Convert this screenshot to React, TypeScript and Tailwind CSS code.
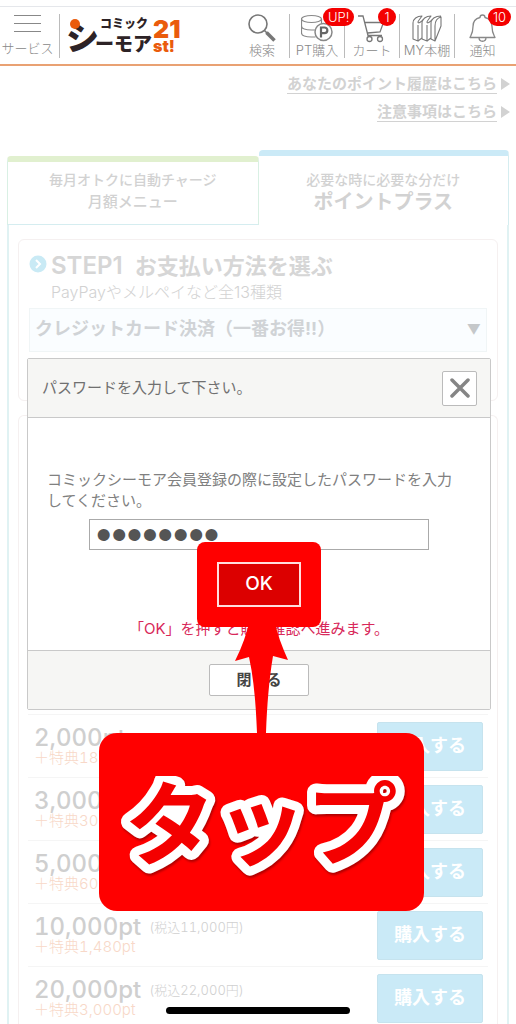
import React from 'react';

const plans = [
{ points: '2,000pt', price: '', bonus: '＋特典180pt' },
{ points: '3,000pt', price: '', bonus: '＋特典300pt' },
{ points: '5,000pt', price: '', bonus: '＋特典600pt' },
{ points: '10,000pt', price: '(税込11,000円)', bonus: '＋特典1,480pt' },
{ points: '20,000pt', price: '(税込22,000円)', bonus: '＋特典3,000pt' }];

const navItems = [
{
  label: '検索',
  badge: '',
  icon:
  <svg viewBox="0 0 32 32" className="h-8 w-8" fill="none" stroke="#777">
      <circle cx="12" cy="10" r="9" strokeWidth="1.600" />
      <path d="M18.500 16.500l3 3" strokeWidth="1.600" />
      <path d="M20.500 18.500l8 8" strokeWidth="3.600" />
    </svg>
},
{
  label: 'PT購入',
  badge: 'UP!',
  icon:
  <svg viewBox="0 0 32 32" className="h-8 w-8" fill="none" stroke="#888" strokeWidth="1.200">
      <ellipse cx="10.500" cy="5" rx="10" ry="3.500" />
      <path d="M.5 5v14c0 2.500 4.500 4 10 4h4M20.500 5v6M.5 12c0 2.500 4.500 4 10 4h4" />
      <circle cx="22.500" cy="18" r="8.500" fill="#fff" strokeWidth="1.500" />
      <path d="M20 23.500V13.500h3.500a2.800 2.800 0 0 1 0 5.700h-3.500" stroke="#666" strokeWidth="2.200" />
    </svg>
},
{
  label: 'カート',
  badge: '1',
  icon:
  <svg viewBox="0 0 32 32" className="h-8 w-8" fill="none" stroke="#777" strokeWidth="1.300">
      <path d="M2 2h5l5 19.500h14M8.500 8.500h19l-3.500 9.500-12.500 1" />
      <circle cx="13.500" cy="25" r="2.500" />
      <circle cx="24" cy="25" r="2.500" />
    </svg>
},
{
  label: 'MY本棚',
  badge: '',
  icon:
  <svg viewBox="0 0 32 32" className="h-8 w-8" fill="none" stroke="#777" strokeWidth="1.100" strokeLinejoin="round">
      <path d="M2 9v16l5 2V11M2 9c0-4 4-7 9-7-2 3-4 5-4 6 0 2 3 0 5-2" />
      <path d="M11 9v16l5 2V11M11 9c0-4 4-7 9-7-2 3-4 5-4 6 0 2 3 0 5-2" />
      <path d="M20 9v16l4 2V12c0-5 2-8 6-9v9l-6 15M20 9c0-4 4-7 10-7M7 27l4-3M16 27l4-3" />
    </svg>
},
{
  label: '通知',
  badge: '10',
  icon:
  <svg viewBox="0 0 32 32" className="h-8 w-8" fill="none" stroke="#888" strokeWidth="1.300" strokeLinejoin="round">
      <path d="M13 3.500a2.500 2.500 0 0 1 5 0c5 1 7 4 7 9 0 6 1 7 3 11H3c2-4 3-5 3-11 0-5 2-8 7-9zM12 23.500c0 5 7 5 7 0" />
    </svg>
}];

function Logo() {
  return (
    <svg viewBox="0 0 118 44" className="ml-1 h-11 w-[118px] shrink-0 overflow-visible font-['Noto_Sans_CJK_JP',sans-serif]" role="img" aria-label="コミックシーモア 21st!">
      <g fill="#2d2326" fontWeight="900">
        <text x="-2" y="36" fontSize="33">シ</text>
        <text x="27" y="37" fontSize="19">ーモア</text>
        <text x="32" y="14" fontSize="12">コミック</text>
      </g>
      <circle cx="7" cy="10" r="5" fill="#ea5b0c" />
      <g fill="#ea5b0c" fontWeight="900" className="font-[Inter,sans-serif]">
        <text x="85" y="24" fontSize="25">21</text>
        <text x="85" y="38" fontSize="16">st!</text>
      </g>
    </svg>);

}

function Header() {
  return (
    <header className="mt-[6px] flex h-[60px] items-center border-t border-b-2 border-t-gray-200 border-b-[#e9a173] bg-white text-[13px] leading-4 font-light text-[#888]">
      <button type="button" className="flex w-[55px] shrink-0 flex-col items-center gap-2">
        <span className="flex w-[27px] flex-col gap-[7px]">
          <span className="h-px bg-[#888]" />
          <span className="h-px bg-[#888]" />
          <span className="h-px bg-[#888]" />
        </span>
        サービス
      </button>
      <span className="ml-1 h-11 w-px shrink-0 bg-[#bbb]" />
      <div className="ml-1"><Logo /></div>
      <nav className="mr-[6px] ml-auto flex">
        {navItems.map((item) =>
        <button
          key={item.label}
          type="button"
          className="relative flex h-11 w-[55px] flex-col items-center justify-between border-r border-[#bbb] whitespace-nowrap last:border-r-0">
            {item.icon}
            <span className="-mt-1">{item.label}</span>
            {item.badge &&
          <span className="absolute -top-[6px] left-[33px] min-w-[18px] rounded-full bg-[#f40000] px-[5px] text-center text-[13px] leading-[18px] text-white">
                {item.badge}
              </span>
          }
          </button>
        )}
      </nav>
    </header>);

}

function Tabs() {
  return (
    <div className="mx-[7px] flex items-end leading-[22px] text-[#d2d2d2]">
      <button type="button" className="h-[69px] flex-1 rounded-t border-x border-t-[6px] border-b border-x-[#d9f0e4] border-t-[#e1f0cf] border-b-[#d5edf0] pb-1 font-medium">
        <span className="block text-sm leading-[22px]">毎月オトクに自動チャージ</span>
        <span className="block text-[15px] leading-[22px]">月額メニュー</span>
      </button>
      <button type="button" className="h-[75px] flex-1 rounded-t border-t-[6px] border-r border-t-[#cbeaf7] border-r-[#d5edf0] font-medium">
        <span className="block text-sm leading-[22px]">必要な時に必要な分だけ</span>
        <span className="block text-xl leading-[22px] font-bold">ポイントプラス</span>
      </button>
    </div>);

}

function PaymentCard() {
  return (
    <section className="h-[162px] rounded-md border border-[#f5f0f0] px-[10px] pt-3">
      <div className="flex">
        <svg viewBox="0 0 18 18" className="mt-[3px] mr-1 h-[18px] w-[18px]">
          <circle cx="9" cy="9" r="8.500" fill="#c9eaf5" />
          <path d="M7 5l4 4-4 4" fill="none" stroke="#fff" strokeWidth="2" />
        </svg>
        <div>
          <h2 className="flex gap-3 text-[22px] leading-7 font-bold text-[#d6d6d6]">
            <span className="text-2xl leading-7 font-semibold">STEP1</span>
            <span>お支払い方法を選ぶ</span>
          </h2>
          <p className="text-base leading-6 font-light text-[#d2d2d2]">PayPayやメルペイなど全13種類</p>
        </div>
      </div>
      <div className="relative mt-1">
        <select aria-label="お支払い方法" className="h-11 w-full appearance-none border border-[#f0f5f6] bg-[#fafdff] px-[5px] pb-[2px] text-lg leading-6 font-bold text-[#d0d3d6]">
          <option>クレジットカード決済（一番お得!!）</option>
        </select>
        <span className="pointer-events-none absolute top-[10px] right-[6px] text-sm leading-6 text-[#c5c8ca]">▼</span>
      </div>
    </section>);

}

function PlanList() {
  return (
    <section className="mt-[14px] rounded-t-md border border-b-0 border-[#f5f0f0] px-[9px] pt-[298px]">
      <ul>
        {plans.map((plan) =>
        <li key={plan.points} className="flex h-[63px] items-center justify-between border-t border-[#f5f5f5] pr-[5px] pl-[6px] tabular-nums">
            <div>
              <p className="flex items-center gap-2 leading-6">
                <span className="text-2xl leading-6 font-medium text-[#cfcfcf]">{plan.points}</span>
                {plan.price && <span className="text-[13px] font-light text-[#d0d0d0]">{plan.price}</span>}
              </p>
              <p className="text-[15px] leading-4 font-light text-[#f8d8c8]">{plan.bonus}</p>
            </div>
            <button type="button" className="h-[49px] w-[106px] rounded-xs border border-[#c6e3ee] bg-[#caeaf7] text-lg font-bold text-white">
              購入する
            </button>
          </li>
        )}
      </ul>
    </section>);

}

function PasswordDialog() {
  return (
    <div role="dialog" aria-labelledby="dialog-title" className="absolute top-[358px] right-[25px] left-[27px] rounded-xs border border-[#c9c9c9] bg-white text-[15px] text-[#808080]">
      <div className="flex h-[59px] items-center justify-between border-b border-[#c9c9c9] bg-[#f6f6f4] pr-[13px] pl-[14px]">
        <h2 id="dialog-title" className="text-[#707070]">パスワードを入力して下さい。</h2>
        <button type="button" aria-label="閉じる" className="flex h-[35px] w-[35px] items-center justify-center rounded-xs border border-[#bbb] bg-white">
          <svg viewBox="0 0 20 20" className="h-5 w-5">
            <path d="M2 2l16 16M18 2L2 18" stroke="#858585" strokeWidth="3.500" strokeLinecap="round" />
          </svg>
        </button>
      </div>
      <form className="flex h-[232px] flex-col items-center pt-[51px]">
        <label htmlFor="password" className="block w-full pr-7 pl-[19px] leading-[21px]">
          コミックシーモア会員登録の際に設定したパスワードを入力してください。
        </label>
        <input
          id="password"
          type="password"
          defaultValue="password"
          className="mt-2 h-[31px] w-[340px] border border-[#aaa] px-[6px] font-['Liberation_Sans',sans-serif] text-[44px] leading-none text-[#555]" />

        <div className="relative z-10 -mt-2 rounded-lg bg-[#ff0000] p-5">
          <button type="button" className="block h-[45px] w-[84px] border-2 border-[#ffdede] bg-[#dc0000] text-[19px] font-medium text-white">
            OK
          </button>
        </div>
        <p className="-mt-2 leading-5 text-[#d8285a]">「OK」を押すと購入確認へ進みます。</p>
      </form>
      <div className="flex h-[59px] items-center justify-center border-t border-[#c9c9c9] bg-[#f6f6f4]">
        <button type="button" className="h-8 w-[100px] rounded-xs border border-[#bbb] bg-white text-[15px] font-bold text-[#444]">
          閉じる
        </button>
      </div>
      <TapCallout />
    </div>);

}

function TapCallout() {
  return (
    <div className="pointer-events-none absolute top-[260px] left-1/2 z-20 -ml-40 flex w-[325px] flex-col items-center">
      <svg viewBox="0 0 54 114" className="h-[114px] w-[54px]" fill="#ff0000">
        <path d="M15 0h24c3 14 8 28 14 41l-15-4c-4 24-6 50-7 77h-9c-1-27-3-53-8-76L0 42C7 28 12 14 15 0z" />
      </svg>
      <div className="w-full rounded-[18px] bg-[#ff0000] pt-[43px] pb-[25px]">
        <svg viewBox="0 0 325 110" className="block h-[110px] w-full overflow-hidden font-['Noto_Sans_CJK_JP',sans-serif]">
          <text
            x="162"
            y="82"
            textAnchor="middle"
            fontSize="91"
            fontWeight="700"
            fill="#f40000"
            stroke="#fff"
            strokeWidth="18"
            strokeLinejoin="round"
            className="[paint-order:stroke] drop-shadow-[1px_2px_1px_rgba(90,0,0,0.5)]">
            タップ
          </text>
        </svg>
      </div>
    </div>);

}

export default function App() {
  return (
    <div className="relative flow-root min-h-screen overflow-hidden bg-white font-[Inter,'Noto_Sans_CJK_JP',sans-serif]">
      <Header />
      <main className="pt-1">
        <div className="flex flex-col items-end pr-[6px] text-[15px] leading-7 font-bold text-[#d2d2d2]">
          <a href="#history" className="flex items-center gap-1">
            <span className="underline underline-offset-4">あなたのポイント履歴はこちら</span>
            <svg viewBox="0 0 9 12" className="h-3 w-[9px]" fill="currentColor"><path d="M0 0l9 6-9 6z" /></svg>
          </a>
          <a href="#notes" className="flex items-center gap-1">
            <span className="underline underline-offset-4">注意事項はこちら</span>
            <svg viewBox="0 0 9 12" className="h-3 w-[9px]" fill="currentColor"><path d="M0 0l9 6-9 6z" /></svg>
          </a>
        </div>
        <div className="mt-6">
          <Tabs />
        </div>
        <div className="mx-[7px] border-x-2 border-b border-[#e0f2f3] px-[9px] pt-[14px]">
          <PaymentCard />
          <PlanList />
        </div>
      </main>
      <PasswordDialog />
      <div className="fixed bottom-[10px] left-1/2 z-30 h-[7px] w-[184px] -translate-x-1/2 rounded-full bg-black" />
    </div>);

}
